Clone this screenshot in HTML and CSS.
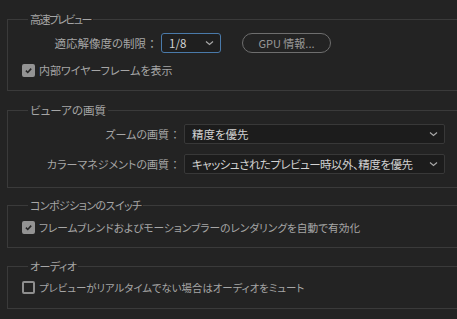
FILE: index.html
```html
<!DOCTYPE html>
<html lang="ja">
<head>
<meta charset="utf-8">
<link rel="stylesheet" href="styles.css">
</head>
<body>
<div class="panel">
  <fieldset class="group g1">
    <legend class="narrow tighter">高速プレビュー</legend>
    <div class="row">
      <span class="label w1">適応解像度の制限<span class="colon">：</span></span>
      <div class="select small active"><span>1/8</span><svg class="chev" width="9" height="6" viewBox="0 0 9 6"><path d="M1 1.5 L4.5 4.5 L8 1.5" fill="none" stroke="#a8a8a8" stroke-width="1.2"/></svg></div>
      <button class="pill">GPU 情報...</button>
    </div>
    <label class="check-row r1"><span class="box checked"><svg width="11" height="11" viewBox="0 0 11 11"><path d="M2.3 5.6 L4.6 7.9 L8.8 3.2" fill="none" stroke="#262626" stroke-width="1.9"/></svg></span>内部ワイヤーフレームを表示</label>
  </fieldset>

  <fieldset class="group g2">
    <legend>ビューアの画質</legend>
    <div class="row">
      <span class="label w2">ズームの画質<span class="colon">：</span></span>
      <div class="select wide"><span>精度を優先</span><svg class="chev" width="9" height="6" viewBox="0 0 9 6"><path d="M1 1.5 L4.5 4.5 L8 1.5" fill="none" stroke="#a8a8a8" stroke-width="1.2"/></svg></div>
    </div>
    <div class="row r2">
      <span class="label w2">カラーマネジメントの画質<span class="colon">：</span></span>
      <div class="select wide"><span class="tight">キャッシュされたプレビュー時以外、精度を優先</span><svg class="chev" width="9" height="6" viewBox="0 0 9 6"><path d="M1 1.5 L4.5 4.5 L8 1.5" fill="none" stroke="#a8a8a8" stroke-width="1.2"/></svg></div>
    </div>
  </fieldset>

  <fieldset class="group g3">
    <legend class="narrow">コンポジションのスイッチ</legend>
    <label class="check-row t3"><span class="box checked"><svg width="11" height="11" viewBox="0 0 11 11"><path d="M2.3 5.6 L4.6 7.9 L8.8 3.2" fill="none" stroke="#262626" stroke-width="1.9"/></svg></span>フレームブレンドおよびモーションブラーのレンダリングを自動で有効化</label>
  </fieldset>

  <fieldset class="group g4">
    <legend class="narrow">オーディオ</legend>
    <label class="check-row t4"><span class="box"></span>プレビューがリアルタイムでない場合はオーディオをミュート</label>
  </fieldset>
</div>
</body>
</html>
```

FILE: styles.css
```css
html, body {
  margin: 0;
  padding: 0;
  background: #232323;
  overflow: hidden;
}
body {
  width: 457px;
  height: 319px;
  font-family: "Noto Sans CJK JP", "Noto Sans", sans-serif;
  font-size: 11px;
  font-feature-settings: "palt";
  color: #a6a6a6;
}
.panel {
  padding-left: 7px;
}
.group {
  margin: 0;
  border: 1px solid #3a3a3a;
  border-right: none;
  padding: 7px 0 12px 14px;
  min-width: 0;
}
.group legend {
  padding: 0 2px;
  margin-left: 6px;
  line-height: 14px;
  height: 14px;
  color: #a6a6a6;
  font-size: 11.5px;
}
.group legend.narrow {
  font-size: 11px;
  letter-spacing: -0.6px;
}
.group legend.tighter {
  letter-spacing: -1.6px;
}
.g1 { margin-top: 12px; padding-bottom: 12px; }
.g2 { margin-top: 12px; padding-top: 7px; padding-bottom: 13px; }
.g3 { margin-top: 10px; padding-top: 7px; padding-bottom: 12px; }
.g4 { margin-top: 11px; padding-top: 6px; padding-bottom: 13px; }

.row {
  display: flex;
  align-items: center;
  height: 20px;
}
.r2 { margin-top: 10px; }
.label {
  text-align: right;
  flex: none;
  white-space: nowrap;
}
.colon {
  display: inline-block;
  width: 12px;
  text-align: center;
  font-feature-settings: normal;
}
.w1 { width: 136px; margin-right: 3px; font-size: 11.5px; }
.w2 { width: 159px; margin-right: 3px; }

.select {
  box-sizing: border-box;
  height: 20px;
  display: flex;
  align-items: center;
  justify-content: space-between;
  background: #1c1c1c;
  border: 1px solid #383838;
  border-radius: 2px;
  color: #d2d2d2;
  padding: 0 6px 0 7px;
  flex: none;
}
.select span { font-size: 11.5px; white-space: nowrap; }
.select span.tight { letter-spacing: -0.5px; }
.small { width: 60px; }
.active {
  border-color: #4a7aaa;
  border-radius: 3px;
  background: #1f1f1f;
}
.wide { width: 261px; }
.chev { flex: none; }

.pill {
  box-sizing: border-box;
  margin-left: 21px;
  width: 89px;
  height: 20px;
  border: 1px solid #6e6e6e;
  border-radius: 10px;
  background: transparent;
  color: #9a9a9a;
  font-family: inherit;
  font-size: 11px;
  padding: 0;
}

.check-row {
  display: flex;
  align-items: center;
  height: 16px;
  white-space: nowrap;
}
.r1 { margin-top: 9px; }
.t3 { font-size: 10.7px; }
.t4 { font-size: 10.4px; }
.box {
  box-sizing: border-box;
  width: 13px;
  height: 13px;
  margin-right: 4px;
  border: 2px solid #8e8e8e;
  border-radius: 2px;
  background: #232323;
  display: flex;
  align-items: center;
  justify-content: center;
  flex: none;
}
.box.checked {
  background: #939393;
  border-color: #939393;
}
.box svg { display: block; }
```
